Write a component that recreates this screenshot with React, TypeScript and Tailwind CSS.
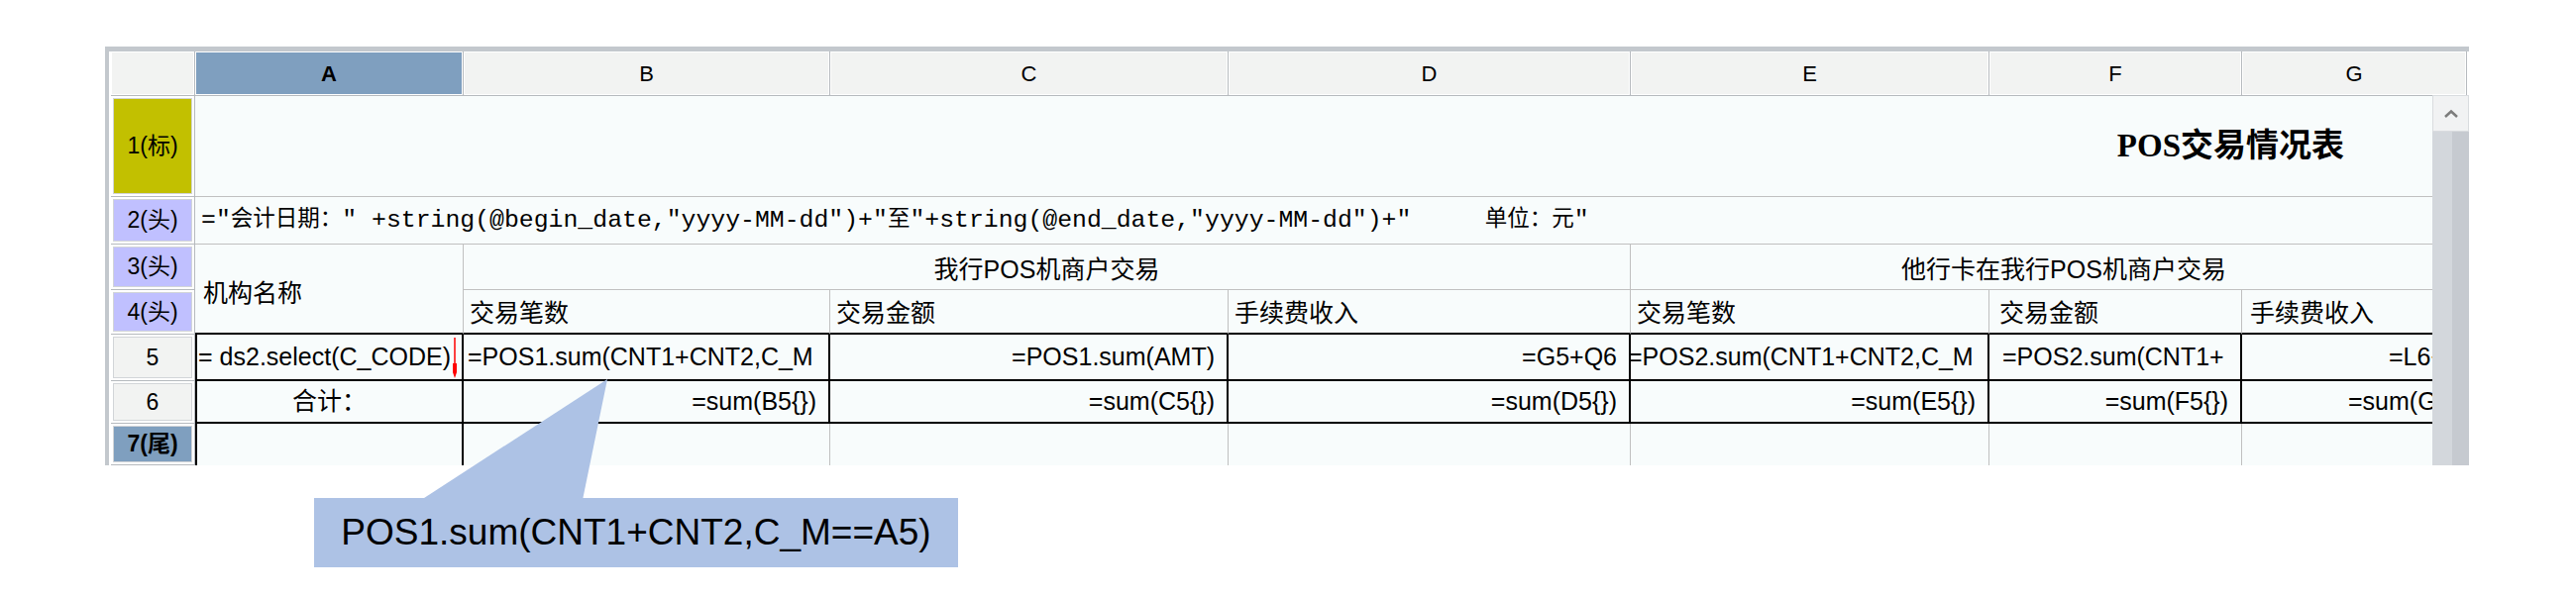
import React from 'react';

const cell = 'bg-[#f8fcfc] overflow-hidden whitespace-nowrap flex items-center text-[25px]';
const cjk = 'text-[23.5px]';

function ColHead({ label, active }: { label: string; active?: boolean }) {
  return (
    <div className="border-r border-b border-[#b6babe] bg-white p-[1px]">
      <div
        className={
          active
            ? 'h-full flex items-center justify-center bg-[#7f9fbf] font-bold text-[22px]'
            : 'h-full flex items-center justify-center bg-[#f2f3f2] text-[22px]'
        }
      >
        {label}
      </div>
    </div>
  );
}

function RowHead({ label, tone }: { label: string; tone: 'title' | 'head' | 'data' | 'tail' }) {
  const fill = {
    title: 'bg-[#c2c000]',
    head: 'bg-[#c0c0ff]',
    data: 'bg-[#f2f3f2]',
    tail: 'bg-[#7f9fbf] font-bold',
  }[tone];
  return (
    <div className="border-r border-b border-[#b6babe] bg-white p-[2px]">
      <div className={`h-full flex items-center justify-center border border-[#d2d5d8] text-[23px] ${fill}`}>
        {label}
      </div>
    </div>
  );
}

function ExpandMark() {
  // red "expand downwards" marker on the data cell
  return (
    <svg className="absolute right-[2px] top-[3px]" width="10" height="42" viewBox="0 0 10 42">
      <line x1="5" y1="0" x2="5" y2="30" stroke="#ff0000" strokeWidth="1.5" />
      <polygon points="3,26 7,26 7,35 5,41 3,35" fill="#ff0000" />
    </svg>
  );
}

export default function App() {
  return (
    <div className="relative w-[2600px] h-[602px] bg-white overflow-hidden pt-[47px] pl-[106px] text-black font-['Liberation_Sans','Noto_Sans_CJK_SC',sans-serif]">
      {/* Sheet designer frame */}
      <div className="relative w-[2386px] h-[423px] overflow-hidden border-t-[5px] border-l-[4px] border-[#c3c8cd] bg-white pl-[2px]">
        <div className="grid grid-cols-[85px_271px_370px_402px_406px_362px_255px_227px] grid-rows-[45px_102px_48px_46px_45px_47px_43px_42px]">
          {/* column headers */}
          <ColHead label="" />
          <ColHead label="A" active />
          <ColHead label="B" />
          <ColHead label="C" />
          <ColHead label="D" />
          <ColHead label="E" />
          <ColHead label="F" />
          <ColHead label="G" />

          {/* 1 title */}
          <RowHead label="1(标)" tone="title" />
          <div className={`${cell} col-span-7 border-b border-[#c0c0c0] justify-end pr-[124px] font-['Liberation_Serif','Noto_Sans_CJK_SC',serif] font-bold text-[33px]`}>
            POS交易情况表
          </div>

          {/* 2 head */}
          <RowHead label="2(头)" tone="head" />
          <div className="col-span-7 bg-[#f8fcfc] border-b border-[#c0c0c0] flex items-center pl-[6px] whitespace-pre font-['Liberation_Mono','Noto_Sans_CJK_SC',monospace] text-[24.8px]">
            <span>="</span>
            <span className="text-[22.5px]">会计日期：</span>
            <span>{'" +string(@begin_date,"yyyy-MM-dd")+"'}</span>
            <span className="text-[22.5px]">至</span>
            <span>{'"+string(@end_date,"yyyy-MM-dd")+"     '}</span>
            <span className="text-[22.5px]">单位：元</span>
            <span>"</span>
          </div>

          {/* 3 head */}
          <RowHead label="3(头)" tone="head" />
          <div className={`${cell} ${cjk} row-span-2 border-r border-r-[#c0c0c0] border-b-2 border-b-black pl-[8px] pt-[10px]`}>
            机构名称
          </div>
          <div className={`${cell} ${cjk} col-span-3 border-r border-b border-[#c0c0c0] justify-center pt-[6px]`}>
            我行POS机商户交易
          </div>
          <div className={`${cell} ${cjk} col-span-3 border-b border-[#c0c0c0] justify-center pl-[30px] pt-[6px]`}>
            他行卡在我行POS机商户交易
          </div>

          {/* 4 head */}
          <RowHead label="4(头)" tone="head" />
          <div className={`${cell} ${cjk} border-r border-r-[#c0c0c0] border-b-2 border-b-black pl-[6px] pt-[5px]`}>交易笔数</div>
          <div className={`${cell} ${cjk} border-r border-r-[#c0c0c0] border-b-2 border-b-black pl-[6px] pt-[5px]`}>交易金额</div>
          <div className={`${cell} ${cjk} border-r border-r-[#c0c0c0] border-b-2 border-b-black pl-[6px] pt-[5px]`}>手续费收入</div>
          <div className={`${cell} ${cjk} border-r border-r-[#c0c0c0] border-b-2 border-b-black pl-[6px] pt-[5px]`}>交易笔数</div>
          <div className={`${cell} ${cjk} border-r border-r-[#c0c0c0] border-b-2 border-b-black pl-[10px] pt-[5px]`}>交易金额</div>
          <div className={`${cell} ${cjk} border-b-2 border-b-black pl-[8px] pt-[5px]`}>手续费收入</div>

          {/* 5 data */}
          <RowHead label="5" tone="data" />
          <div className={`${cell} relative border-l-2 border-r-2 border-b-2 border-black justify-end pr-[11px]`}>
            <span className="shrink-0">= ds2.select(C_CODE)</span>
            <ExpandMark />
          </div>
          <div className={`${cell} border-r-2 border-b-2 border-black pl-[4px]`}>=POS1.sum(CNT1+CNT2,C_M</div>
          <div className={`${cell} border-r-2 border-b-2 border-black justify-end pr-[12px]`}>=POS1.sum(AMT)</div>
          <div className={`${cell} border-r-2 border-b-2 border-black justify-end pr-[12px]`}>=G5+Q6</div>
          <div className={`${cell} border-r-2 border-b-2 border-black`}>
            <span className="-ml-[3px]">=POS2.sum(CNT1+CNT2,C_M</span>
          </div>
          <div className={`${cell} border-r-2 border-b-2 border-black pl-[13px]`}>=POS2.sum(CNT1+</div>
          <div className={`${cell} border-b-2 border-black pl-[148px]`}>=L6+Q6</div>

          {/* 6 data */}
          <RowHead label="6" tone="data" />
          <div className={`${cell} text-[23px] border-l-2 border-r-2 border-b-2 border-black justify-center`}>合计：</div>
          <div className={`${cell} border-r-2 border-b-2 border-black justify-end pr-[12px]`}>=sum(B5{'{}'})</div>
          <div className={`${cell} border-r-2 border-b-2 border-black justify-end pr-[12px]`}>=sum(C5{'{}'})</div>
          <div className={`${cell} border-r-2 border-b-2 border-black justify-end pr-[12px]`}>=sum(D5{'{}'})</div>
          <div className={`${cell} border-r-2 border-b-2 border-black justify-end pr-[12px]`}>=sum(E5{'{}'})</div>
          <div className={`${cell} border-r-2 border-b-2 border-black justify-end pr-[12px]`}>=sum(F5{'{}'})</div>
          <div className={`${cell} border-b-2 border-black pl-[107px]`}>=sum(G5{'{}'})</div>

          {/* 7 tail */}
          <RowHead label="7(尾)" tone="tail" />
          <div className={`${cell} bg-[#f5f7f7] border-l-2 border-r-2 border-black`} />
          <div className={`${cell} border-r border-[#c0c0c0]`} />
          <div className={`${cell} border-r border-[#c0c0c0]`} />
          <div className={`${cell} border-r border-[#c0c0c0]`} />
          <div className={`${cell} border-r border-[#c0c0c0]`} />
          <div className={`${cell} border-r border-[#c0c0c0]`} />
          <div className={cell} />
        </div>

        {/* vertical scrollbar */}
        <div className="absolute right-0 top-[44px] bottom-0 w-[37px] flex flex-col bg-[#cdd1d6]">
          <div className="h-[37px] bg-[#f1f2f3] border border-[#d9dcdf] flex items-center justify-center">
            <svg width="16" height="10" viewBox="0 0 16 10">
              <polyline points="2,8 8,2.5 14,8" fill="none" stroke="#7c7c7c" strokeWidth="2.5" />
            </svg>
          </div>
          <div className="flex-1 flex">
            <div className="w-[20px] bg-[#d3d7dc]" />
            <div className="flex-1 bg-[#c6cad0]" />
          </div>
        </div>
      </div>

      {/* callout */}
      <div className="ml-[211px] mt-[33px] w-[650px] h-[70px] bg-[#adc2e5] flex items-center justify-center text-[37px]">
        POS1.sum(CNT1+CNT2,C_M==A5)
      </div>
      <svg className="absolute left-0 top-0 pointer-events-none" width="2600" height="602" viewBox="0 0 2600 602">
        <polygon points="613,383 425,505 588,505" fill="#adc2e5" />
      </svg>
    </div>
  );
}
